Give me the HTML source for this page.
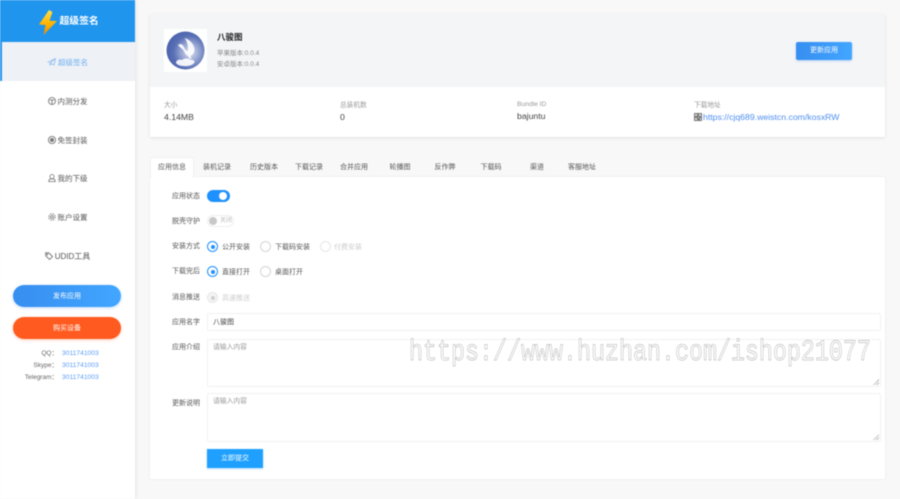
<!DOCTYPE html>
<html lang="zh"><head><meta charset="utf-8"><title>超级签名</title>
<style>
*{box-sizing:border-box;margin:0;padding:0}
html,body{width:900px;height:499px;overflow:hidden;background:#f8f8f8}
body{font-family:"Liberation Sans","Noto Sans CJK SC",sans-serif;color:#444;position:relative}
#w{position:absolute;left:0;top:0;width:900px;height:499px;filter:blur(.4px)}
.a{position:absolute;white-space:nowrap}
.side{left:0;top:0;width:135px;height:499px;background:#fff;box-shadow:1px 0 4px rgba(0,0,0,.08)}
.nav{left:0;width:135px;text-align:center;font-size:7.5px;color:#555;line-height:12px}
.nav svg{vertical-align:-1px;margin-right:2px}
.lb{width:60px;left:140px;text-align:right;font-size:7px;color:#555;line-height:12px}
.rd{width:11px;height:11px;border:1px solid #d5d5d5;border-radius:50%;background:#fff}
.rd.on{border-color:#1e90ff}
.rd.on:after{content:"";position:absolute;left:2.5px;top:2.5px;width:4px;height:4px;border-radius:50%;background:#1e90ff}
.rd.dis{border-color:#e6e6e6}
.rd.dis.on{background:#f5f5f5}
.rd.dis.on:after{background:#cfcfcf}
.rt{font-size:7px;color:#555;line-height:12px}
.box{left:207px;width:674px;border:1px solid #f1f1f1;background:#fff;border-radius:2px;font-size:6.8px;color:#999;padding:2px 5px;line-height:12px}
.tab{top:162px;width:46px;text-align:center;font-size:7px;color:#555;line-height:12px}
.cl{font-size:6.5px;color:#666;line-height:12px;left:0;width:58px;text-align:right}
.cv{font-size:6.7px;color:#5b9cf5;left:62px;line-height:12px}
.sl{font-size:6.7px;color:#999;line-height:10px}
.sv{font-size:8.7px;color:#444;line-height:12px}
.grip{position:absolute;right:1px;bottom:1px;width:6px;height:6px;background:linear-gradient(135deg,transparent 50%,#bbb 50%,#bbb 60%,transparent 60%,transparent 74%,#bbb 74%,#bbb 84%,transparent 84%)}
</style></head><body><div id="w">

<div class="a side"></div>
<div class="a" style="left:0;top:0;width:135px;height:42px;background:#2095ee"></div>
<svg class="a" style="left:38px;top:9px" width="20" height="27" viewBox="0 0 20 27"><defs><linearGradient id="b" x1="0" y1="0" x2="0" y2="1"><stop offset="0" stop-color="#ffe14d"/><stop offset=".55" stop-color="#ffb400"/><stop offset="1" stop-color="#e98a00"/></linearGradient></defs><path d="M11 1 1 15.500l6.500.5L5.500 26 19 12l-7.500-.3L14.500 3z" fill="url(#b)"/></svg>
<div class="a" style="left:59.500px;top:15px;font-size:9.800px;font-weight:bold;color:#fff;line-height:14px">超级签名</div>

<div class="a" style="left:0;top:42px;width:135px;height:39px;background:#eef1f6;border-left:2px solid #2095ee"></div>
<div class="a nav" style="top:56.500px;color:#6fb0f2"><svg width="9" height="8" viewBox="0 0 9 8" fill="none" stroke="#8dbdf0" stroke-width=".8"><path d="M.5 4.500 8.500.5 7 7 4 5.500 3 7.500V5.200L8.500.5"/></svg>超级签名</div>
<div class="a nav" style="top:95.500px"><svg width="8" height="8" viewBox="0 0 8 8" fill="none" stroke="#666" stroke-width=".8"><circle cx="4" cy="4" r="3.500"/><path d="M1.500 3h5M4 3v4"/></svg>内测分发</div>
<div class="a nav" style="top:134.500px"><svg width="8" height="8" viewBox="0 0 8 8"><circle cx="4" cy="4" r="3.600" fill="none" stroke="#666" stroke-width=".8"/><circle cx="4" cy="4" r="2" fill="#777"/></svg>免签封装</div>
<div class="a nav" style="top:173px"><svg width="8" height="8" viewBox="0 0 8 8" fill="none" stroke="#777" stroke-width=".8"><circle cx="4" cy="2.600" r="2.100"/><path d="M.7 7.600c0-2 1.300-2.800 3.300-2.800s3.300.8 3.300 2.800z"/></svg>我的下级</div>
<div class="a nav" style="top:212px"><svg width="8" height="8" viewBox="0 0 8 8" fill="none" stroke="#666" stroke-width=".8"><circle cx="4" cy="4" r="1.400"/><circle cx="4" cy="4" r="3.200" stroke-dasharray="1.500 1"/></svg>账户设置</div>
<div class="a nav" style="top:250.500px;left:0;font-size:8px"><svg width="8" height="8" viewBox="0 0 8 8" fill="none" stroke="#666" stroke-width=".8"><path d="M.5.800h3.300l3.700 3.700-3 3L.8 3.800z"/><circle cx="2.300" cy="2.500" r=".5"/></svg>UDID工具</div>

<div class="a" style="left:13px;top:285px;width:108px;height:22px;border-radius:11px;background:linear-gradient(90deg,#378ef0,#42a6ff);box-shadow:0 1px 3px rgba(60,140,240,.3);color:#fff;font-size:7px;text-align:center;line-height:23px">发布应用</div>
<div class="a" style="left:13px;top:317px;width:108px;height:22px;border-radius:11px;background:#ff5a1f;box-shadow:0 1px 3px rgba(255,90,30,.3);color:#fff;font-size:7px;text-align:center;line-height:23px">购买设备</div>
<div class="a cl" style="top:348px">QQ：</div><div class="a cv" style="top:348px">3011741003</div>
<div class="a cl" style="top:360px">Skype：</div><div class="a cv" style="top:360px">3011741003</div>
<div class="a cl" style="top:372px">Telegram：</div><div class="a cv" style="top:372px">3011741003</div>

<div class="a" style="left:150px;top:14px;width:735px;height:123px;background:#fff;box-shadow:0 1px 3px rgba(0,0,0,.1)"></div>
<div class="a" style="left:150px;top:14px;width:735px;height:73px;background:#f4f5f7"></div>
<svg class="a" style="left:164px;top:29px" width="43" height="43" viewBox="0 0 43 43"><defs><radialGradient id="g" cx=".62" cy=".55" r=".62"><stop offset="0" stop-color="#d8ddef"/><stop offset=".35" stop-color="#9dabd5"/><stop offset=".7" stop-color="#5a70b5"/><stop offset="1" stop-color="#4a62ad"/></radialGradient></defs><rect width="43" height="43" fill="#fff"/><circle cx="21.500" cy="21.500" r="19" fill="url(#g)"/><path d="M14 16c2-1.500 4-1 5 .5 1.500 2 2 5 4.500 5.500 1-4 0-9-3-13 5 1.500 10 6 10 12 0 3-2 5-4 6l1 3-2-.5-2-3c-2 0-3-4-4.500-6-1.500-1-3-2-5-4.500z" fill="#fff" opacity=".9"/><path d="M12 34c0-2.500 3-4 6-3 2-2 7-2 8.500 0 2.500-.5 4.500 1 4 2.500-2 3-7 4-11 3.500-3 0-6-1-7.500-3z" fill="#fff" opacity=".9"/></svg>
<div class="a" style="left:217px;top:31px;font-size:8.500px;font-weight:bold;color:#222;line-height:12px">八骏图</div>
<div class="a" style="left:217px;top:47.500px;font-size:6.500px;color:#888;line-height:12px">苹果版本:0.0.4</div>
<div class="a" style="left:217px;top:58.500px;font-size:6.500px;color:#888;line-height:12px">安卓版本:0.0.4</div>
<div class="a" style="left:796px;top:42px;width:56px;height:18px;border-radius:2px;background:linear-gradient(90deg,#378ef0,#42a6ff);box-shadow:0 1px 2px rgba(60,140,240,.35);color:#fff;font-size:7px;text-align:center;line-height:18px">更新应用</div>

<div class="a sl" style="left:164px;top:101px">大小</div>
<div class="a sv" style="left:164px;top:111px">4.14MB</div>
<div class="a sl" style="left:340px;top:101px">总装机数</div>
<div class="a sv" style="left:340px;top:111px">0</div>
<div class="a sl" style="left:517px;top:100px">Bundle ID</div>
<div class="a sv" style="left:517px;top:110px">bajuntu</div>
<div class="a sl" style="left:694px;top:101px">下载地址</div>
<svg class="a" style="left:694px;top:113px" width="8" height="8" viewBox="0 0 8 8"><rect width="8" height="8" fill="#777"/><path d="M1 1h2v2H1zM5 1h2v2H5zM1 5h2v2H1zM4 4h1v1H4zM6 5h1v2H6z" fill="#ddd"/></svg>
<div class="a" style="left:703px;top:111px;font-size:8.700px;color:#4f8ff0;line-height:12px">https://cjq689.weistcn.com/kosxRW</div>

<div class="a" style="left:150px;top:177px;width:735px;height:302px;background:#fff;box-shadow:0 0 2px rgba(0,0,0,.08)"></div>
<div class="a" style="left:150px;top:157px;width:44px;height:21px;background:#fff;border:1px solid #f0f0f0;border-bottom:0"></div>
<div class="a tab" style="left:150px;width:44px">应用信息</div>
<div class="a tab" style="left:194px">装机记录</div>
<div class="a tab" style="left:241px">历史版本</div>
<div class="a tab" style="left:286px">下载记录</div>
<div class="a tab" style="left:331px">合并应用</div>
<div class="a tab" style="left:377px">轮播图</div>
<div class="a tab" style="left:422px">反作弊</div>
<div class="a tab" style="left:468px">下载码</div>
<div class="a tab" style="left:514px">渠道</div>
<div class="a tab" style="left:559px">客服地址</div>

<div class="a lb" style="top:191px">应用状态</div>
<div class="a" style="left:207px;top:190px;width:23px;height:12px;border-radius:6px;background:#1e90ff"></div>
<div class="a" style="left:219px;top:192px;width:8px;height:8px;border-radius:50%;background:#fff"></div>

<div class="a lb" style="top:216px">脱壳守护</div>
<div class="a" style="left:207px;top:215px;width:27px;height:12px;border-radius:6px;border:1px solid #eee;background:#fff"></div>
<div class="a" style="left:209px;top:217px;width:8px;height:8px;border-radius:50%;background:#c8c8c8"></div>
<div class="a" style="left:220px;top:216px;font-size:6px;color:#bbb;line-height:10px">关闭</div>

<div class="a lb" style="top:241px">安装方式</div>
<div class="a rd on" style="left:207px;top:241px"></div><div class="a rt" style="left:222px;top:242px">公开安装</div>
<div class="a rd" style="left:260px;top:241px"></div><div class="a rt" style="left:275px;top:242px">下载码安装</div>
<div class="a rd dis" style="left:320px;top:241px"></div><div class="a rt" style="left:334px;top:242px;color:#ccc">付费安装</div>

<div class="a lb" style="top:266px">下载完后</div>
<div class="a rd on" style="left:207px;top:266px"></div><div class="a rt" style="left:222px;top:267px">直接打开</div>
<div class="a rd" style="left:260px;top:266px"></div><div class="a rt" style="left:275px;top:267px">桌面打开</div>

<div class="a lb" style="top:292px">消息推送</div>
<div class="a rd dis on" style="left:207px;top:292px"></div><div class="a rt" style="left:222px;top:293px;color:#ccc">高速推送</div>

<div class="a lb" style="top:317px">应用名字</div>
<div class="a box" style="top:313px;height:18px;color:#444;font-size:7px;padding-top:3px">八骏图</div>
<div class="a lb" style="top:342px">应用介绍</div>
<div class="a box" style="top:339px;height:48px">请输入内容<span class="grip"></span></div>
<div class="a lb" style="top:398px">更新说明</div>
<div class="a box" style="top:393px;height:49px">请输入内容<span class="grip"></span></div>
<div class="a" style="left:207px;top:449px;width:56px;height:19px;background:#1fa0ff;box-shadow:0 1px 2px rgba(30,150,255,.3);color:#fff;font-size:7px;text-align:center;line-height:19px">立即提交</div>

<svg class="a" style="left:0;top:0" width="900" height="499"><text transform="translate(409 360) scale(.778 1)" font-family="Liberation Mono" font-size="30" fill="#fff" fill-opacity=".7" stroke="#a8a8a8" stroke-width=".5">https://www.huzhan.com/ishop21077</text></svg>
</div></body></html>
